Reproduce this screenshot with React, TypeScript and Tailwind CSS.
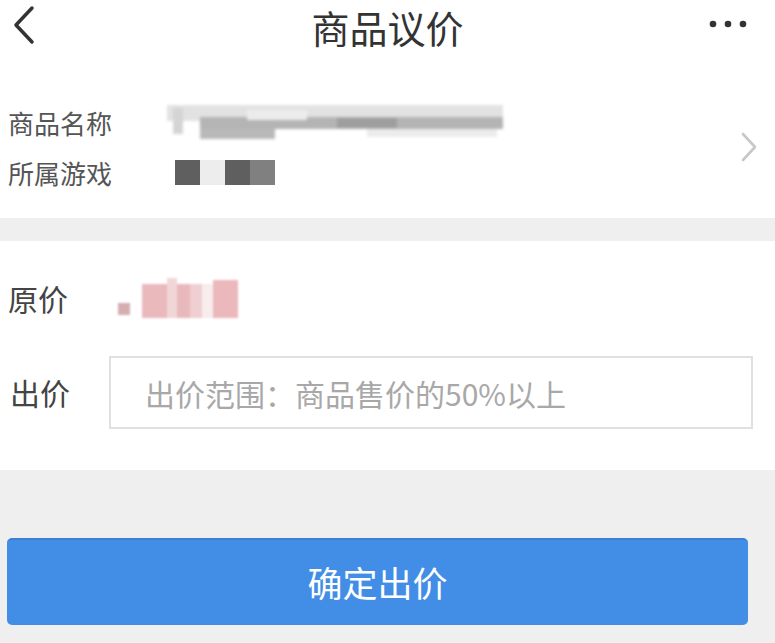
import { useState } from "react";

const font = "font-['Noto_Sans_CJK_SC','Noto_Sans',sans-serif]";

function BackIcon() {
  return (
    <svg width="28" height="40" viewBox="0 0 28 40" fill="none">
      <path
        d="M22 3 L6 20 L22 37"
        stroke="#333"
        strokeWidth="3.5"
        strokeLinecap="round"
        strokeLinejoin="round"
      />
    </svg>
  );
}

function MoreIcon() {
  return (
    <svg width="40" height="10" viewBox="0 0 40 10">
      <circle cx="5" cy="5" r="3.3" fill="#333" />
      <circle cx="20" cy="5" r="3.3" fill="#333" />
      <circle cx="35" cy="5" r="3.3" fill="#333" />
    </svg>
  );
}

function ChevronRight() {
  return (
    <svg width="20" height="32" viewBox="0 0 20 32" fill="none">
      <path
        d="M4 3 L16 16 L4 29"
        stroke="#c8c8c8"
        strokeWidth="2.6"
        strokeLinecap="round"
        strokeLinejoin="round"
      />
    </svg>
  );
}

// mosaic that hides the product name
function NameMosaic() {
  return (
    <div className="relative h-[36px] w-[336px] blur-[1.5px]">
      <div className="absolute left-0 top-[1px] h-[16px] w-[336px] bg-[#e2e2e2]" />
      <div className="absolute left-[6px] top-[4px] h-[26px] w-[10px] bg-[#d4d4d4]" />
      <div className="absolute left-[33px] top-[13px] h-[12px] w-[303px] bg-[#b4b4b4]" />
      <div className="absolute left-[80px] top-[6px] h-[10px] w-[60px] bg-[#ececec]" />
      <div className="absolute left-[170px] top-[14px] h-[10px] w-[60px] bg-[#9e9e9e]" />
      <div className="absolute left-[33px] top-[25px] h-[10px] w-[75px] bg-[#b9b9b9]" />
      <div className="absolute left-[200px] top-[25px] h-[8px] w-[130px] bg-[#ececec]" />
    </div>
  );
}

function GameMosaic() {
  return (
    <div className="flex h-[25px]">
      <div className="w-[25px] bg-[#5f5f5f]" />
      <div className="w-[25px] bg-[#ededed]" />
      <div className="w-[25px] bg-[#5f5f5f]" />
      <div className="w-[25px] bg-[#808080]" />
    </div>
  );
}

function PriceMosaic() {
  return (
    <div className="flex h-[40px] items-end blur-[1px]">
      <div className="mb-[3px] mr-[12px] h-[12px] w-[12px] bg-[#d4aeb1]" />
      <div className="h-[34px] w-[25px] bg-[#e9b9bc]" />
      <div className="h-[40px] w-[10px] bg-[#f1d6d8]" />
      <div className="h-[34px] w-[13px] bg-[#e8b9bc]" />
      <div className="h-[34px] w-[12px] bg-[#efcfd1]" />
      <div className="h-[34px] w-[11px] bg-[#f8ecec]" />
      <div className="h-[38px] w-[25px] bg-[#ebb8bb]" />
    </div>
  );
}

export default function App() {
  const [offer, setOffer] = useState("");

  return (
    <div className={`${font} flex h-[643px] w-[775px] flex-col bg-[#efefef]`}>
      <div className="bg-white">
        <header className="relative flex h-[56px] items-start justify-center pt-[8px]">
          <button className="absolute left-[10px] top-[5px]">
            <BackIcon />
          </button>
          <h1 className="text-[38px] leading-none text-[#333]">商品议价</h1>
          <button className="absolute right-[27px] top-[19px]">
            <MoreIcon />
          </button>
        </header>

        <div className="flex items-center pb-[21px] pl-[8px] pr-[16px] pt-[41px]">
          <div className="flex-1">
            <div className="flex h-[50px] items-center">
              <span className="w-[159px] text-[26px] text-[#555]">商品名称</span>
              <NameMosaic />
            </div>
            <div className="flex h-[50px] items-center">
              <span className="w-[167px] text-[26px] text-[#555]">所属游戏</span>
              <GameMosaic />
            </div>
          </div>
          <ChevronRight />
        </div>
      </div>

      <div className="mt-[23px] bg-white pb-[41px] pl-[8px] pr-[22px] pt-[32px]">
        <div className="flex h-[50px] items-center">
          <span className="w-[110px] text-[30px] text-[#444]">原价</span>
          <PriceMosaic />
        </div>
        <div className="mt-[33px] flex h-[73px] items-center">
          <span className="w-[101px] pl-[2px] text-[30px] text-[#444]">出价</span>
          <input
            value={offer}
            onChange={(e) => setOffer(e.target.value)}
            placeholder="出价范围：商品售价的50%以上"
            className="h-[73px] flex-1 border-2 border-[#e0e0e0] bg-white pl-[34px] text-[30px] text-[#333] outline-none placeholder:text-[#a8a8a8]"
          />
        </div>
      </div>

      <div className="pl-[7px] pt-[68px]">
        <button className="h-[87px] w-[741px] rounded-[5px] border-t-2 border-[#3b80d8] bg-[#428ee6] text-[35px] text-white">
          确定出价
        </button>
      </div>
    </div>
  );
}
